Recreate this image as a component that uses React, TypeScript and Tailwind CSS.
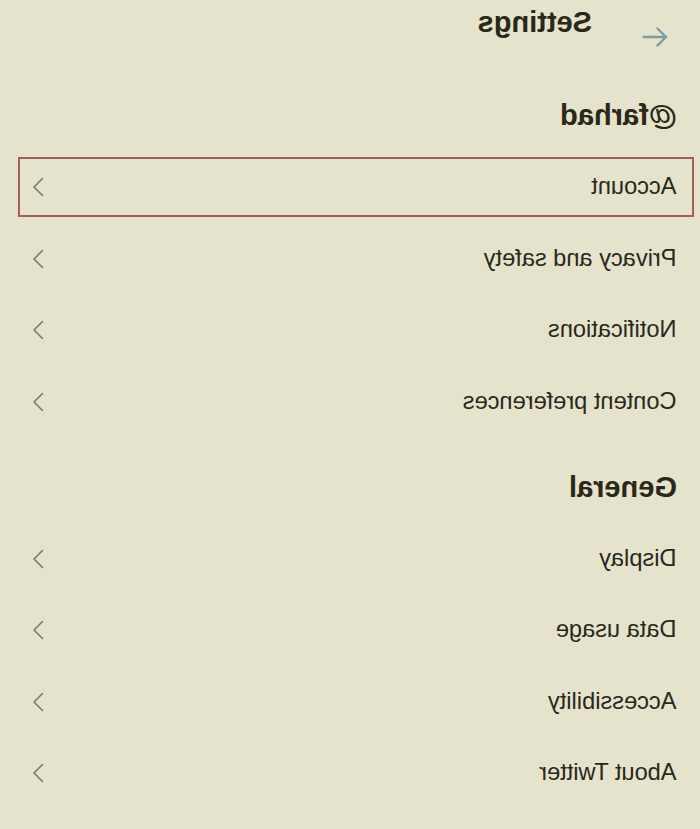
import React from "react";

const Chevron = () => (
  <svg width="12" height="20" viewBox="0 0 12 20" fill="none" className="shrink-0">
    <polyline points="1.5,1.5 10,10 1.5,18.5" stroke="#7a796b" strokeWidth="1.6" strokeLinecap="round" strokeLinejoin="round" />
  </svg>
);

const Row = ({ label, focused }: { label: string; focused?: boolean }) => (
  <div
    className={`flex h-[60px] items-center justify-between pl-[15.5px] pr-[12px] border-2 ${
      focused ? "border-[#aa5d54]" : "border-transparent"
    }`}
  >
    <span className="text-[23.6px] leading-none text-[#29281d]">{label}</span>
    <Chevron />
  </div>
);

const Section = ({ title, items, focusFirst }: { title: string; items: string[]; focusFirst?: boolean }) => (
  <div className="flex flex-col">
    <div className="pl-[17px] text-[29px] font-bold leading-[32px] text-[#2a2818]">{title}</div>
    <div className="mt-[26px] flex flex-col gap-[11.5px]">
      {items.map((it, i) => (
        <Row key={it} label={it} focused={focusFirst && i === 0} />
      ))}
    </div>
  </div>
);

export default function App() {
  return (
    <div
      className="w-[700px] h-[829px] overflow-hidden bg-[#e5e3cb] -scale-x-100"
      style={{ fontFamily: '"Liberation Sans", Arial, sans-serif' }}
    >
      <div className="pl-[6px] pr-[18px] pt-[2px]">
        <div className="flex items-start pl-[26px]">
          <svg width="26" height="20" viewBox="0 0 26 20" fill="none" className="mt-[25px] shrink-0">
            <line x1="24.5" y1="10" x2="2" y2="10" stroke="#7f9ca1" strokeWidth="2.4" strokeLinecap="round" />
            <polyline points="10.5,1.5 2,10 10.5,18.5" stroke="#7f9ca1" strokeWidth="2.4" strokeLinecap="round" strokeLinejoin="round" />
          </svg>
          <div className="ml-[50px] mt-[4px] text-[29px] font-bold leading-[32px] text-[#2a2818]">Settings</div>
        </div>
        <div className="mt-[52px]">
          <Section
            title="@farhad"
            focusFirst
            items={["Account", "Privacy and safety", "Notifications", "Content preferences"]}
          />
        </div>
        <div className="mt-[39px]">
          <Section title="General" items={["Display", "Data usage", "Accessibility", "About Twitter"]} />
        </div>
      </div>
    </div>
  );
}
